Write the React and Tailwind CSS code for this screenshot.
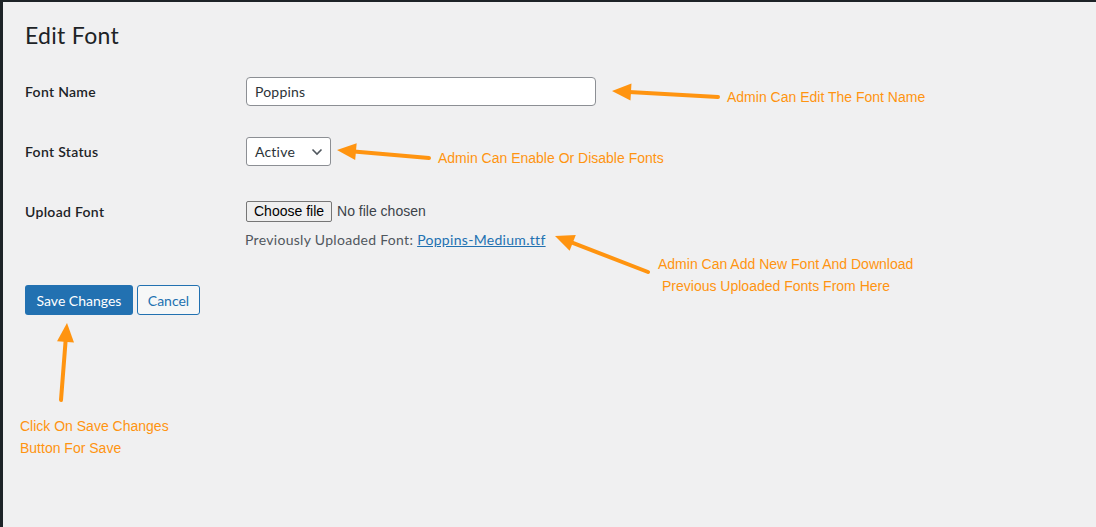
import React from 'react'

const ORANGE = '#ff9410'

function Arrow({ from, to }) {
  // tail -> tip, with a filled triangular head at the tip
  const [x1, y1] = from
  const [x2, y2] = to
  const dx = x2 - x1
  const dy = y2 - y1
  const len = Math.hypot(dx, dy)
  const ux = dx / len
  const uy = dy / len
  const head = 19
  const half = 8.5
  const bx = x2 - ux * head
  const by = y2 - uy * head
  const px = -uy
  const py = ux
  const pts = `${x2},${y2} ${bx + px * half},${by + py * half} ${bx - px * half},${by - py * half}`
  return (
    <g>
      <line x1={x1} y1={y1} x2={bx + ux * 2} y2={by + uy * 2} stroke={ORANGE} strokeWidth="4" strokeLinecap="round" />
      <polygon points={pts} fill={ORANGE} />
    </g>
  )
}

function Note({ className, children }) {
  return (
    <div
      className={`absolute text-[14px] leading-[22px] text-[#ff9410] whitespace-nowrap ${className}`}
      style={{ fontFamily: '"Liberation Sans", Arial, sans-serif' }}
    >
      {children}
    </div>
  )
}

export default function App() {
  return (
    <div className="relative w-[1096px] h-[527px] overflow-hidden bg-[#f0f0f1]" style={{ fontFamily: 'Lato, "Open Sans", sans-serif' }}>
      <div className="h-[2px] bg-[#1d2327]" />
      <div className="flex h-[525px]">
        <div className="w-[3px] bg-[#1d2327]" />
        <div className="flex-1 pl-[22px]">
          <h1 className="mt-[18px] text-[23px] leading-[30px] font-normal tracking-[0.3px] text-[#1d2327]">Edit Font</h1>

          {/* Font name */}
          <div className="mt-[27px] flex items-center h-[29px]">
            <div className="w-[221px] text-[14px] font-semibold tracking-[0.3px] text-[#1d2327]">Font Name</div>
            <div className="w-[350px] h-[29px] bg-white border border-[#8c8f94] rounded-[4px] flex items-center px-[8px] text-[14px] tracking-[0.2px] text-[#2c3338]">
              Poppins
            </div>
          </div>

          {/* Font status */}
          <div className="mt-[31px] flex items-center h-[29px]">
            <div className="w-[221px] text-[14px] font-semibold tracking-[0.3px] text-[#1d2327]">Font Status</div>
            <div className="w-[85px] h-[29px] bg-white border border-[#8c8f94] rounded-[3px] flex items-center justify-between pl-[8px] pr-[7px] text-[14px] tracking-[0.2px] text-[#2c3338]">
              <span>Active</span>
              <svg width="12" height="8" viewBox="0 0 12 8">
                <path d="M1.5 1.5 L6 6 L10.5 1.5" fill="none" stroke="#50575e" strokeWidth="1.6" />
              </svg>
            </div>
          </div>

          {/* Upload */}
          <div className="mt-[35px] flex items-start">
            <div className="w-[221px] pt-[1px] text-[14px] font-semibold tracking-[0.3px] text-[#1d2327] leading-[20px]">Upload Font</div>
            <div className="-ml-[1px]">
              <div className="flex items-center gap-[5px] h-[20px] ml-[1px]" style={{ fontFamily: '"Liberation Sans", Arial, sans-serif' }}>
                <div className="h-[21px] px-[7px] flex items-center bg-[#efefef] border border-[#767676] rounded-[2px] text-[14px] text-black">
                  Choose file
                </div>
                <span className="text-[14px] text-[#3c434a]">No file chosen</span>
              </div>
              <div className="mt-[9px] text-[14px] leading-[20px] tracking-[0.3px] text-[#50575e]">
                Previously Uploaded Font:{' '}
                <span className="text-[#2271b1] underline">Poppins-Medium.ttf</span>
              </div>
            </div>
          </div>

          {/* Buttons */}
          <div className="mt-[35px] flex gap-[4px]">
            <div className="h-[30px] w-[108px] flex items-center justify-center rounded-[3px] bg-[#2271b1] text-white text-[14px]">
              Save Changes
            </div>
            <div className="h-[30px] w-[63px] flex items-center justify-center rounded-[3px] border border-[#2271b1] bg-[#f6f7f7] text-[#2271b1] text-[14px]">
              Cancel
            </div>
          </div>
        </div>
      </div>

      {/* annotation overlay */}
      <svg className="absolute inset-0 pointer-events-none" width="1096" height="527">
        <Arrow from={[718, 97]} to={[612, 91]} />
        <Arrow from={[429, 158]} to={[337, 150]} />
        <Arrow from={[648, 272]} to={[555, 236]} />
        <Arrow from={[61, 400]} to={[67, 323]} />
      </svg>
      <Note className="left-[727px] top-[86px]">Admin Can Edit The Font Name</Note>
      <Note className="left-[438px] top-[147px]">Admin Can Enable Or Disable Fonts</Note>
      <Note className="left-[658px] top-[253px]">Admin Can Add New Font And Download</Note>
      <Note className="left-[662px] top-[275px]">Previous Uploaded Fonts From Here</Note>
      <Note className="left-[20px] top-[415px]">Click On Save Changes</Note>
      <Note className="left-[20px] top-[437px]">Button For Save</Note>
    </div>
  )
}
